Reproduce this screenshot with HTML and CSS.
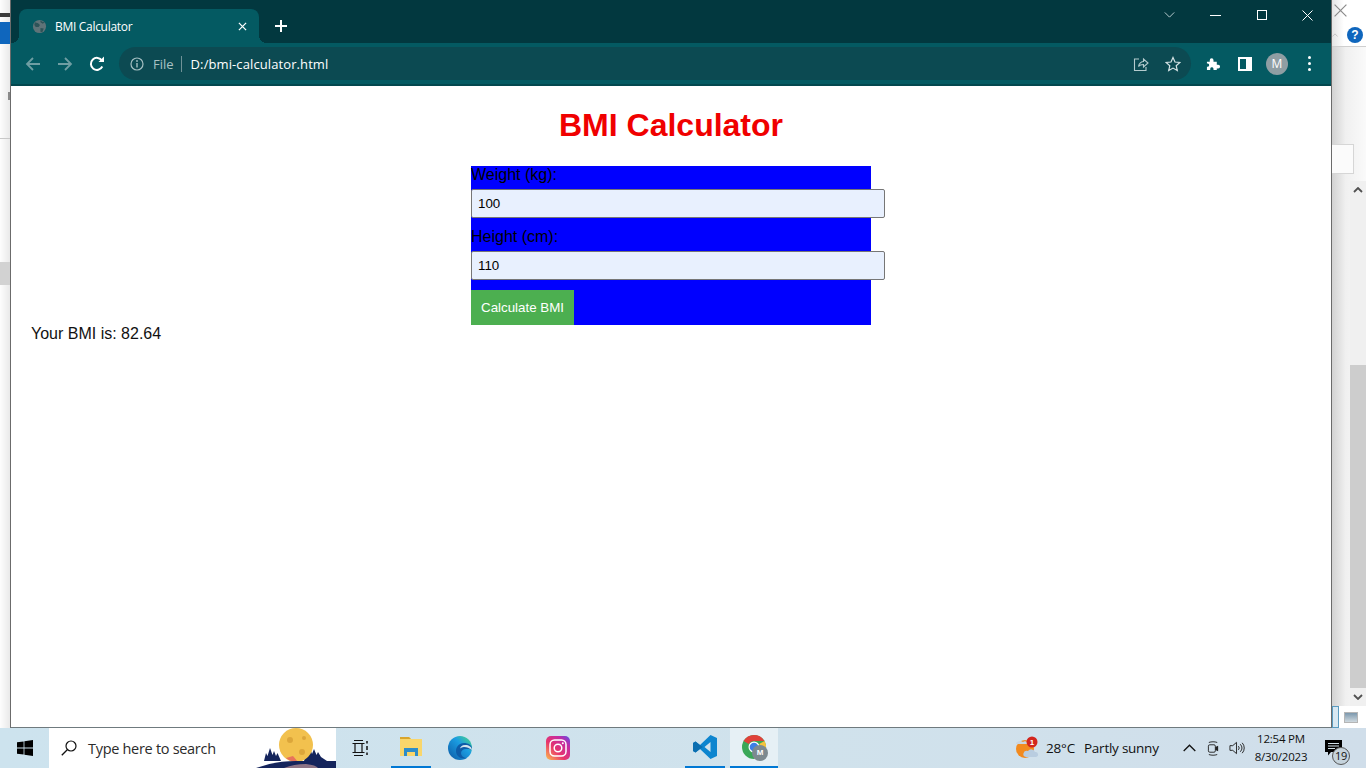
FILE: index.html
```html
<!DOCTYPE html>
<html lang="en">
<head>
<meta charset="utf-8">
<title>BMI Calculator</title>
<link rel="stylesheet" href="styles.css">
</head>
<body>
<div class="desktop">
  <aside class="back-left">
    <div class="bl-dash"></div>
    <div class="bl-blue"></div>
    <div class="bl-tick"></div>
    <div class="bl-line"></div>
    <div class="bl-gray"></div>
  </aside>

  <main class="browser">
    <header class="titlebar">
      <div class="tab">
        <svg class="favicon" viewBox="0 0 16 16"><circle cx="8" cy="8" r="7" fill="#5f7378"/><path d="M3 3.500l3.500 1 2 2-1.500 2-3 0-1.500-2zM9 9.500l3.500.5-1.500 4-2-.5zM9 1.500l2 1.500 2.500.5-2 1.500-2.500-1.500z" fill="#2e5358"/></svg>
        <span class="tab-title">BMI Calculator</span>
        <svg class="tab-close" viewBox="0 0 10 10"><path d="M1 1l8 8M9 1l-8 8" stroke="#fff" stroke-width="1.400"/></svg>
      </div>
      <svg class="newtab" viewBox="0 0 12 12"><path d="M6 0v12M0 6h12" stroke="#fff" stroke-width="2"/></svg>
      <div class="winctl">
        <svg class="wc wc-chev" viewBox="0 0 12 7"><path d="M.5.5L6 6l5.500-5.500" fill="none" stroke="#d5e3e5" stroke-width="1"/></svg>
        <svg class="wc wc-min" viewBox="0 0 11 1"><path d="M0 .5h11" stroke="#fff"/></svg>
        <svg class="wc wc-max" viewBox="0 0 10 10"><rect x=".5" y=".5" width="9" height="9" fill="none" stroke="#fff"/></svg>
        <svg class="wc wc-x" viewBox="0 0 11 11"><path d="M.5.5l10 10M10.500.5l-10 10" stroke="#fff"/></svg>
      </div>
    </header>

    <nav class="toolbar">
      <svg class="nav" viewBox="0 0 16 16"><path d="M15 8H2M8 2L2 8l6 6" fill="none" stroke="#6f9ea3" stroke-width="1.800"/></svg>
      <svg class="nav" viewBox="0 0 16 16"><path d="M1 8h13M8 2l6 6-6 6" fill="none" stroke="#6f9ea3" stroke-width="1.800"/></svg>
      <svg class="nav" viewBox="0 0 16 16"><path d="M13.300 10.500A6 6 0 1 1 13 4.700" fill="none" stroke="#fff" stroke-width="2"/><path d="M9.500 6H15V.5z" fill="#fff"/></svg>
      <div class="omnibox">
        <svg class="info" viewBox="0 0 14 14"><circle cx="7" cy="7" r="6" fill="none" stroke="#a5bfc2" stroke-width="1.200"/><path d="M7 6v4.500" stroke="#a5bfc2" stroke-width="1.400"/><circle cx="7" cy="4" r=".9" fill="#a5bfc2"/></svg>
        <span class="scheme">File</span>
        <span class="url">D:/bmi-calculator.html</span>
        <svg class="omni-share" viewBox="0 0 16 16"><path d="M5.500 10.500C6 7 9 5.500 10.500 5.500V3L15 7l-4.500 4V8.500C8.500 8.500 6.500 9 5.500 10.500zM6 3H1.500v11.500H13V11" fill="none" stroke="#b5cbce" stroke-width="1.100"/></svg>
        <svg class="omni-star" viewBox="0 0 16 16"><path d="M8 1.500l2 4.500 4.900.5-3.700 3.200 1.100 4.800L8 12.100l-4.300 2.400 1.100-4.800L1.100 6.500 6 6z" fill="none" stroke="#d5e3e5" stroke-width="1.200"/></svg>
      </div>
      <svg class="ext" viewBox="0 0 16 16"><path d="M1 6h3V4.500a2 2 0 0 1 4 0V6h3.500v3.200H13a2 2 0 0 1 0 4h-1.500V15H8v-1.500a1.800 1.800 0 0 0-3.500 0V15H1v-3.500h1a1.800 1.800 0 0 0 0-3.500H1z" fill="#fff"/></svg>
      <svg class="side" viewBox="0 0 14 14"><path fill-rule="evenodd" d="M0 0h14v14H0zM2 2v10h6V2z" fill="#fff"/></svg>
      <div class="avatar">M</div>
      <div class="menu"><i></i><i></i><i></i></div>
    </nav>

    <section class="page">
      <h1>BMI Calculator</h1>
      <form class="bmi-form">
        <label class="lbl" for="w">Weight (kg):</label>
        <input class="field" id="w" type="text" value="100">
        <label class="lbl lbl-second" for="h">Height (cm):</label>
        <input class="field" id="h" type="text" value="110">
        <button class="calc" type="button">Calculate BMI</button>
      </form>
      <p class="result">Your BMI is: 82.64</p>
    </section>
  </main>

  <aside class="back-right">
    <div class="br-top">
      <svg class="br-x" viewBox="0 0 11 11"><path d="M.5.5l10 10M10.500.5l-10 10" stroke="#8a8a8a"/></svg>
      <div class="br-row">
        <svg class="br-chev" viewBox="0 0 8 5"><path d="M.5 4.500L4 1l3.500 3.500" fill="none" stroke="#b5b5b5"/></svg>
        <div class="br-help">?</div>
      </div>
    </div>
    <div class="br-box"></div>
    <div class="scrollbar">
      <svg class="sb-arrow" viewBox="0 0 10 6"><path d="M1 5l4-4 4 4" fill="none" stroke="#505050" stroke-width="1.800"/></svg>
      <div class="sb-space"></div>
      <div class="sb-thumb"></div>
      <svg class="sb-arrow" viewBox="0 0 10 6"><path d="M1 1l4 4 4-4" fill="none" stroke="#505050" stroke-width="1.800"/></svg>
    </div>
    <div class="br-views">
      <span class="view-a"></span>
      <span class="view-b"></span>
    </div>
  </aside>
</div>

<footer class="taskbar">
  <div class="tb-start">
    <svg viewBox="0 0 16 16"><path d="M0 2.300l6.600-.9v6.200H0zM7.400 1.300L16 0v7.600H7.400zM0 8.400h6.600v6.200L0 13.700zM7.400 8.400H16V16l-8.600-1.200z" fill="#000"/></svg>
  </div>
  <div class="tb-search">
    <svg class="s-icon" viewBox="0 0 16 16"><circle cx="10" cy="6" r="5" fill="none" stroke="#111" stroke-width="1.200"/><path d="M6.500 9.500L.8 15.200" stroke="#111" stroke-width="1.300"/></svg>
    <span class="s-text">Type here to search</span>
    <svg class="s-art" viewBox="0 0 80 40">
      <path d="M8 33l2-8 1.500 3L14 20l2.500 7 1.500-4 2 5 1.500-3L25 33zM48 33l2-7 1.500 2L54 20l2 6 2-5 2.500 6 1.500-3 3 5 6 4z" fill="#14245c"/>
      <circle cx="40" cy="17" r="17" fill="#f2c14e"/>
      <circle cx="34" cy="12" r="3" fill="#dca63a"/><circle cx="46" cy="24" r="3" fill="#dca63a"/><circle cx="48" cy="10" r="2" fill="#dca63a"/>
      <path d="M30 30a17 17 0 0 0 12 4l-5-6z" fill="#e8735a"/>
      <path d="M0 40Q18 33 40 33H80V40z" fill="#14245c"/>
      <path d="M28 40Q38 36 50 36 60 37 62 40z" fill="#8d7486"/>
    </svg>
  </div>
  <div class="tb-slot tb-tv">
    <svg class="ic-tv" viewBox="0 0 16 16"><path d="M2 .5h9M2 15.500h9M3 3.500h7v9H3zM.5 3.500h2M.5 12.500h2M10.500 3.500h2M10.500 12.500h2" fill="none" stroke="#111" stroke-width="1.200"/><path d="M15 1v2.500M15 6v4M15 12.500V15" stroke="#111" stroke-width="1.500"/></svg>
  </div>
  <div class="tb-apps">
    <div class="tb-slot tb-run">
      <svg class="ic" viewBox="0 0 24 24"><path d="M1 2h9l2 2h11v17H1z" fill="#f9d66b"/><path d="M1 2h9l2 2H1z" fill="#d9a52d"/><path d="M5 13h14v8h-3v-4H8v4H5z" fill="#2d8dc9"/></svg>
    </div>
    <div class="tb-slot">
      <svg class="ic" viewBox="0 0 24 24"><defs><linearGradient id="eg" x1="0" y1="1" x2="1" y2="0"><stop offset="0" stop-color="#0c59a4"/><stop offset=".6" stop-color="#1b9de2"/><stop offset="1" stop-color="#4fdc7e"/></linearGradient></defs><circle cx="12" cy="12" r="12" fill="url(#eg)"/><path d="M24 13c0-4-4-6-8-6-5 0-8 4-8 8 0 5 5 9 11 7-3 0-6-2-6-5 0-2 2-4 5-4s6 1 6 0z" fill="#0d5ca8"/><path d="M24 14c0-3-3-5-7-5-3 0-5 2-5 4 0-1 2-2 4-2 3 0 5 1 8 3z" fill="#d2e4ee"/></svg>
    </div>
    <div class="tb-slot"></div>
    <div class="tb-slot">
      <svg class="ic" viewBox="0 0 24 24"><defs><linearGradient id="ig" x1="0" y1="1" x2="1" y2="0"><stop offset="0" stop-color="#fdc04d"/><stop offset=".4" stop-color="#e8356b"/><stop offset=".75" stop-color="#c32aa3"/><stop offset="1" stop-color="#5b4fe9"/></linearGradient></defs><rect width="24" height="24" rx="5" fill="url(#ig)"/><rect x="4" y="4" width="16" height="16" rx="4.500" fill="none" stroke="#fff" stroke-width="1.500"/><circle cx="12" cy="12" r="3.800" fill="none" stroke="#fff" stroke-width="1.500"/><circle cx="16.800" cy="7.200" r="1" fill="#fff"/></svg>
    </div>
    <div class="tb-slot"></div>
    <div class="tb-slot"></div>
    <div class="tb-slot tb-run">
      <svg class="ic" viewBox="0 0 24 24"><path d="M17.500 0L24 3v18l-6.500 3L7 14l-4.500 3.500L0 16V8l2.500-1.500L7 10zM17.500 7l-6 5 6 5z" fill="#0d85cf"/><path d="M7 10L2.500 6.500 0 8v8l2.500 1.500L7 14l3-2z" fill="#0b6eb0"/></svg>
    </div>
    <div class="tb-slot tb-run tb-active">
      <div class="chrome">
        <svg class="ic" viewBox="0 0 24 24"><circle cx="12" cy="12" r="12" fill="#3aa757"/><path d="M12 0a12 12 0 0 1 10.400 6H12a6 6 0 0 0-5.200 3L1.600 6A12 12 0 0 1 12 0z" fill="#e0413a"/><path d="M22.400 6A12 12 0 0 1 12 24l5.200-9a6 6 0 0 0 0-6z" fill="#f5c33b"/><circle cx="12" cy="12" r="5.500" fill="#fff"/><circle cx="12" cy="12" r="4.300" fill="#3d7fe6"/></svg>
        <span class="chrome-badge">M</span>
      </div>
    </div>
  </div>
  <div class="tray">
    <svg class="weather" viewBox="0 0 24 24"><circle cx="10" cy="13" r="9" fill="#f28a1e"/><path d="M1 8a4 3 0 0 1 7-2 3 3 0 0 1 5 2z" fill="#c9d6e2"/><path d="M11 21a3.500 3 0 0 1 2-6 4 4 0 0 1 7 1 2.500 2.500 0 0 1 1 5z" fill="#b9cde0"/><circle cx="17" cy="6" r="5.500" fill="#d3261d"/><text x="17" y="9" class="w-num">1</text></svg>
    <span class="w-temp">28°C</span>
    <span class="w-desc">Partly sunny</span>
    <svg class="t-chev" viewBox="0 0 13 8"><path d="M.7 7L6.500 1.200 12.300 7" fill="none" stroke="#111" stroke-width="1.300"/></svg>
    <svg class="t-meet" viewBox="0 0 14 16"><path d="M2 1.500C5 .5 8 .5 11 1.500M2 14.500c3 1 6 1 9 0" fill="none" stroke="#222"/><rect x="1.500" y="4" width="7.500" height="8" rx="1.500" fill="none" stroke="#222"/><path d="M9 6.500l3-1.500v6l-3-1.500z" fill="#222"/></svg>
    <svg class="t-vol" viewBox="0 0 17 14"><path d="M1 4.500h3L8 1v12L4 9.500H1z" fill="none" stroke="#222"/><path d="M10 5a3 3 0 0 1 0 4M12 3a6 6 0 0 1 0 8M14 1.500a8 8 0 0 1 0 11" fill="none" stroke="#222"/></svg>
    <div class="clock"><span>12:54 PM</span><span>8/30/2023</span></div>
    <div class="notif">
      <svg viewBox="0 0 17 16"><path d="M0 0h17v12H6l-3 3.500V12H0z" fill="#000"/><path d="M3 3.500h11M3 6h11M3 8.500h7" stroke="#d0dfe8"/></svg>
      <span class="notif-count">19</span>
    </div>
  </div>
</footer>
</body>
</html>
```

FILE: styles.css
```css
* { box-sizing: border-box; }
html, body { margin: 0; padding: 0; width: 1366px; height: 768px; overflow: hidden; }
body { display: flex; flex-direction: column; background: #fff; font-family: "Liberation Sans", Arial, sans-serif; }

.desktop { display: flex; height: 728px; flex: none; }

/* window peeking out on the left */
.back-left { width: 10px; flex: none; display: flex; flex-direction: column; background: linear-gradient(90deg, #fdfdfd, #e9e9e9); }
.bl-dash { width: 10px; height: 4px; margin-top: 13px; background: #3b3b3b; }
.bl-blue { width: 10px; height: 22px; margin-top: 5px; background: #0f66bd; }
.bl-tick { width: 2px; height: 8px; margin: 48px 0 0 8px; background: #8a8a8a; }
.bl-line { width: 10px; height: 1px; margin-top: 38px; background: #c8c8c8; }
.bl-gray { width: 10px; height: 23px; margin-top: 123px; background: #d2d2d2; }

/* browser */
.browser { width: 1322px; flex: none; display: flex; flex-direction: column; border-left: 1px solid #6b6b6b; border-right: 1px solid #6b6b6b; border-bottom: 1px solid #6f7a7e; background: #fff; }
.titlebar { height: 43px; flex: none; display: flex; align-items: flex-end; background: #02383f; padding-left: 8px; }
.tab { position: relative; width: 240px; height: 34px; display: flex; align-items: center; background: #045a62; border-radius: 8px 8px 0 0; padding: 0 11px 0 13px; }
.tab::before, .tab::after { content: ""; position: absolute; bottom: 0; width: 8px; height: 8px; }
.tab::before { left: -8px; background: radial-gradient(circle at 0 0, transparent 8px, #045a62 8px); }
.tab::after { right: -8px; background: radial-gradient(circle at 100% 0, transparent 8px, #045a62 8px); }
.favicon { width: 15px; height: 15px; flex: none; }
.tab-title { margin-left: 8px; flex: 1; color: #fff; font: 12px "Open Sans", sans-serif; letter-spacing: -.3px; }
.tab-close { width: 9px; height: 9px; flex: none; margin-right: 1px; }
.newtab { width: 12px; height: 12px; flex: none; margin: 0 0 11px 16px; }
.winctl { margin-left: auto; align-self: flex-start; display: flex; align-items: center; height: 30px; }
.wc { display: block; flex: none; }
.wc-chev { width: 11px; height: 6px; margin-right: 35px; }
.wc-min { width: 11px; height: 1px; margin-right: 36px; }
.wc-max { width: 10px; height: 10px; margin-right: 35px; }
.wc-x { width: 11px; height: 11px; margin-right: 18px; }

.toolbar { height: 43px; flex: none; display: flex; align-items: center; background: #045a62; border-bottom: 2px solid #03474e; padding: 0 0 0 14px; }
.nav { width: 16px; height: 16px; flex: none; margin-right: 16px; }
.omnibox { width: 1072px; height: 33px; margin-left: -2px; flex: none; display: flex; align-items: center; background: #0c4a52; border-radius: 17px; padding: 0 10px 0 11px; }
.info { width: 14px; height: 14px; flex: none; }
.scheme { margin-left: 9px; padding-right: 7px; border-right: 1px solid #6f9297; color: #a9c1c4; font: 13px/16px "Open Sans", sans-serif; }
.url { margin-left: 9px; flex: 1; color: #fff; font: 13px/16px "Open Sans", sans-serif; letter-spacing: .1px; }
.omni-share { width: 16px; height: 16px; flex: none; margin-right: 16px; }
.omni-star { width: 16px; height: 16px; flex: none; }
.ext { width: 15px; height: 15px; flex: none; margin-left: 15px; }
.side { width: 14px; height: 14px; flex: none; margin-left: 17px; }
.avatar { width: 22px; height: 22px; flex: none; margin-left: 14px; border-radius: 50%; background: #8f9ea3; color: #fff; font: 12px/22px "Open Sans", sans-serif; text-align: center; }
.menu { margin-left: 20px; display: flex; flex-direction: column; gap: 3px; }
.menu i { display: block; width: 3px; height: 3px; border-radius: 50%; background: #fff; }

/* page */
.page { flex: 1; padding-top: 21px; background: #fff; }
h1 { margin: 0 0 22px; text-align: center; color: #f00000; font: bold 32px/37px "Liberation Sans", Arial, sans-serif; }
.bmi-form { width: 400px; height: 159px; margin: 0 auto; background: #0000ff; display: flex; flex-direction: column; align-items: flex-start; }
.lbl { height: 23px; color: #000; font: 16px/18px "Liberation Sans", Arial, sans-serif; display: block; }
.lbl-second { margin-top: 10px; height: 23px; }
.field { width: 414px; height: 29px; flex: none; border: 1px solid #767676; border-radius: 2px; background: #e8f0fe; padding: 0 6px; font: 13.333px "Liberation Sans", Arial, sans-serif; color: #000; }
.calc { margin-top: 10px; width: 103px; height: 35px; flex: none; border: 0; padding: 0; background: #4caf50; color: #fff; font: 13.333px "Liberation Sans", Arial, sans-serif; }
.result { margin: 0; padding: 0 0 0 20px; color: #111; font: 16px/18px "Liberation Sans", Arial, sans-serif; }

/* window peeking out on the right */
.back-right { width: 34px; flex: none; display: flex; flex-direction: column; background: linear-gradient(90deg, #d2d2d2, #f0f0f0 40%, #fafafa); }
.br-top { height: 47px; flex: none; display: flex; flex-direction: column; align-items: flex-end; border-bottom: 1px solid #cfcfcf; background: linear-gradient(90deg, #e4e4e4, #fff 35%); }
.br-x { width: 13px; height: 13px; margin: 4px 19px 0 0; flex: none; }
.br-row { width: 34px; height: 16px; margin-top: 10px; flex: none; display: flex; align-items: center; justify-content: space-between; padding: 0 3px 0 0; }
.br-chev { width: 6px; height: 4px; flex: none; }
.br-help { width: 16px; height: 16px; flex: none; border-radius: 50%; background: #0f66bd; color: #fff; font: bold 12px/16px "Liberation Sans", Arial, sans-serif; text-align: center; }
.br-box { width: 22px; height: 30px; margin-top: 97px; flex: none; background: #fbfbfb; border: 1px solid #d6d6d6; border-left: 0; }
.scrollbar { width: 16px; height: 525px; margin: 7px 0 0 18px; flex: none; display: flex; flex-direction: column; align-items: center; background: #f0f0f0; }
.sb-arrow { width: 10px; height: 6px; margin: 6px 0; flex: none; }
.sb-space { height: 166px; flex: none; }
.sb-thumb { width: 16px; flex: 1; background: #cdcdcd; }
.br-views { display: flex; align-items: center; gap: 5px; height: 22px; background: #fff; }
.view-a { width: 7px; height: 22px; background: #d8e8f2; border: 1px solid #5a9bc0; }
.view-b { width: 14px; height: 11px; background: linear-gradient(#7c98ad, #cfd9df); border: 1px solid #b5b5b5; }

/* taskbar */
.taskbar { height: 40px; flex: none; display: flex; background: linear-gradient(90deg, #cde3ee, #d0e2ec 60%, #d0deea); }
.tb-start { width: 49px; flex: none; display: flex; align-items: center; justify-content: center; }
.tb-start svg { width: 16px; height: 16px; }
.tb-search { width: 287px; flex: none; display: flex; align-items: center; background: #fff; padding-left: 12px; overflow: hidden; }
.s-icon { width: 16px; height: 16px; flex: none; }
.s-text { margin-left: 11px; width: 167px; flex: none; color: #2b2b2b; font: 14.5px "Open Sans", sans-serif; letter-spacing: -.3px; }
.s-art { width: 80px; height: 40px; flex: none; margin-left: 1px; }
.tb-slot { width: 49px; flex: none; display: flex; align-items: center; justify-content: center; }
.tb-tv { padding-right: 2px; }
.ic-tv { width: 16px; height: 16px; }
.tb-apps { display: flex; margin-left: 1px; }
.ic { width: 24px; height: 24px; display: block; flex: none; }
.tb-run { border-bottom: 2px solid #0078d4; margin: 0 4px 0 5px; width: 40px; }
.tb-active { background: #e6f0f5; width: 48px; margin: 0 0 0 1px; }
.chrome { position: relative; width: 24px; height: 24px; }
.chrome-badge { position: absolute; right: -2px; bottom: -2px; width: 16px; height: 16px; border-radius: 50%; background: #7d8a90; color: #fff; font: bold 8px/16px "Liberation Sans", Arial, sans-serif; text-align: center; }

.tray { margin-left: auto; display: flex; align-items: center; color: #111; }
.weather { width: 24px; height: 24px; flex: none; }
.w-num { font: bold 8px "Liberation Sans", Arial, sans-serif; fill: #fff; text-anchor: middle; }
.w-temp { margin-left: 7px; font: 13.5px "Open Sans", sans-serif; letter-spacing: -.2px; }
.w-desc { margin-left: 9px; width: 92px; font: 13.5px "Open Sans", sans-serif; letter-spacing: -.25px; }
.t-chev { width: 13px; height: 8px; flex: none; margin-left: 7px; }
.t-meet { width: 13px; height: 15px; flex: none; margin-left: 11px; }
.t-vol { width: 16px; height: 14px; flex: none; margin-left: 9px; }
.clock { margin-left: 10px; width: 52px; display: flex; flex-direction: column; align-items: center; font: 11.5px/18px "Open Sans", sans-serif; letter-spacing: -.2px; }
.notif { position: relative; width: 41px; height: 40px; margin-left: 18px; flex: none; }
.notif svg { position: absolute; left: 0; top: 12px; width: 17px; height: 16px; }
.notif-count { position: absolute; left: 7px; top: 19px; width: 18px; height: 18px; border: 1px solid #555; border-radius: 50%; background: #c5d3dc; color: #111; font: 11px/16px "Open Sans", sans-serif; text-align: center; letter-spacing: -.3px; }
```
